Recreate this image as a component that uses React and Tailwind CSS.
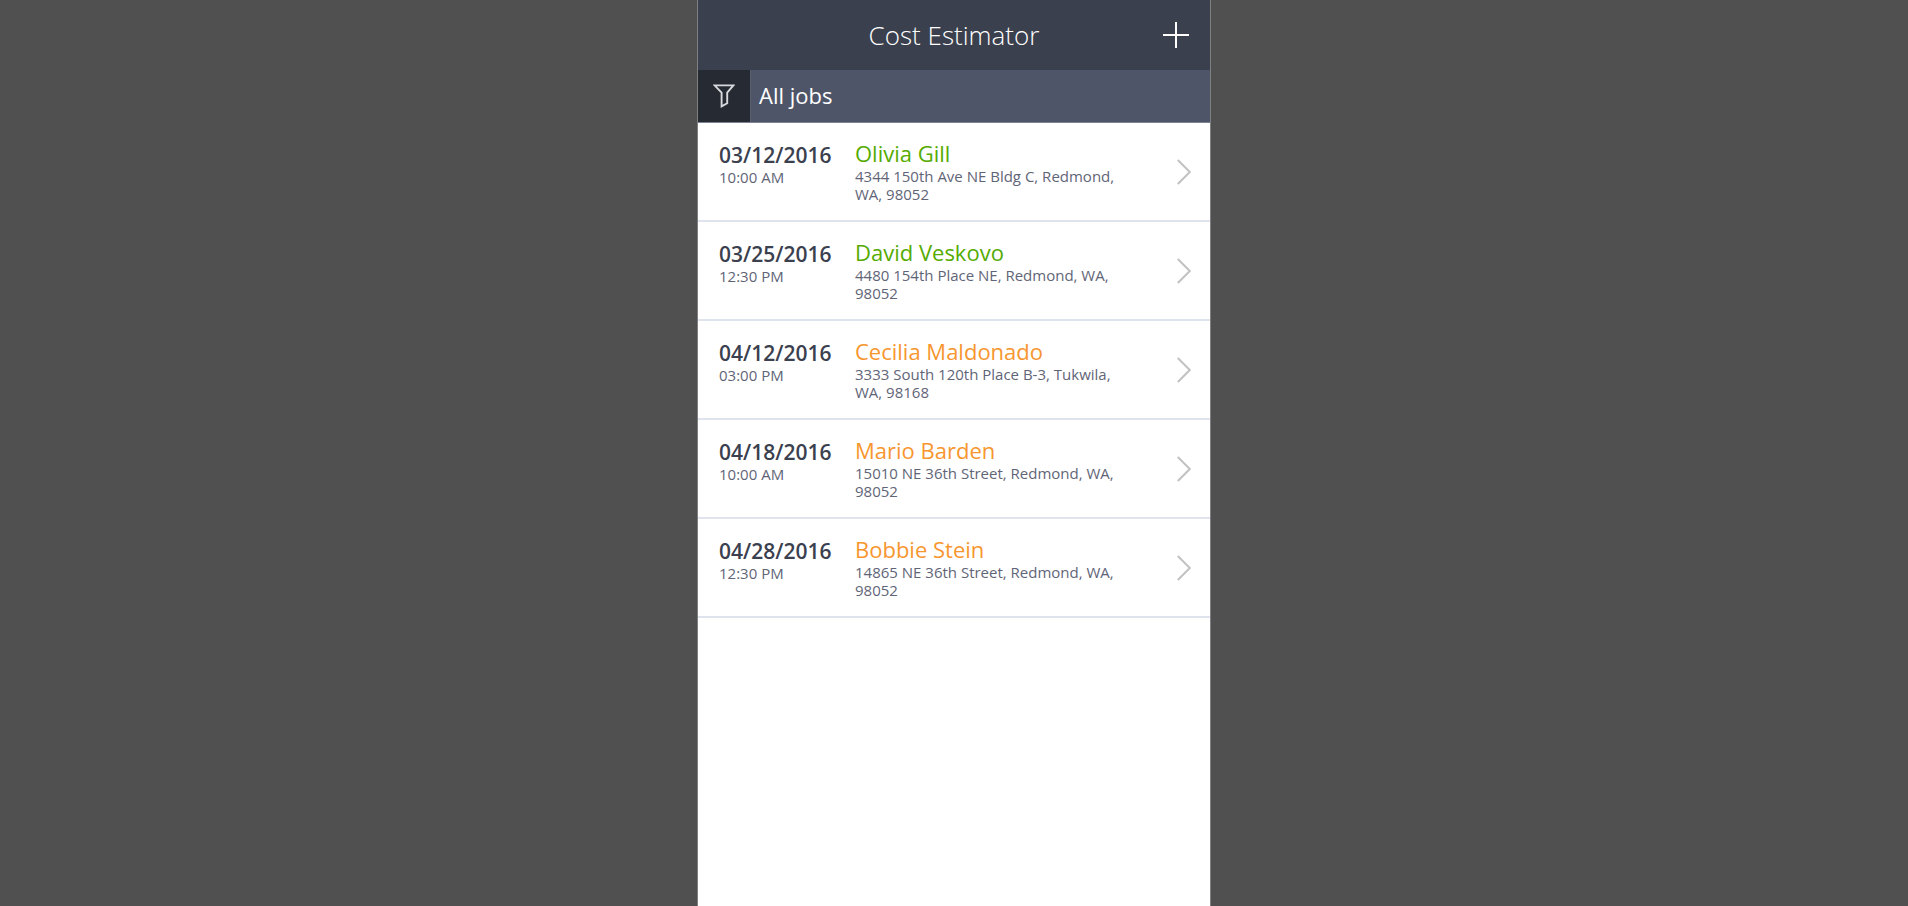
import React from 'react';

const jobs = [
  { date: '03/12/2016', time: '10:00 AM', name: 'Olivia Gill', address: '4344 150th Ave NE Bldg C, Redmond, WA, 98052', done: true },
  { date: '03/25/2016', time: '12:30 PM', name: 'David Veskovo', address: '4480 154th Place NE, Redmond, WA, 98052', done: true },
  { date: '04/12/2016', time: '03:00 PM', name: 'Cecilia Maldonado', address: '3333 South 120th Place B-3, Tukwila, WA, 98168', done: false },
  { date: '04/18/2016', time: '10:00 AM', name: 'Mario Barden', address: '15010 NE 36th Street, Redmond, WA, 98052', done: false },
  { date: '04/28/2016', time: '12:30 PM', name: 'Bobbie Stein', address: '14865 NE 36th Street, Redmond, WA, 98052', done: false },
];

const PlusIcon = () => (
  <svg width="26" height="26" viewBox="0 0 26 26" fill="none" stroke="currentColor" strokeWidth="2" aria-hidden="true">
    <path d="M13 0v26M0 13h26" />
  </svg>
);

const FilterIcon = () => (
  <svg width="22" height="24" viewBox="0 0 22 24" fill="none" stroke="currentColor" strokeWidth="1.9" aria-hidden="true">
    <path d="M1.6 1.4h18.8L14.2 8.6v10.6L8.6 22.4V8.6z" />
  </svg>
);

const ChevronIcon = () => (
  <svg width="14" height="26" viewBox="0 0 14 26" fill="none" stroke="currentColor" strokeWidth="2" aria-hidden="true">
    <path d="M.8 1l12 12-12 12" />
  </svg>
);

const JobRow = ({ job }) => (
  <li className="border-b-2 border-[#dfe3ed]">
    <a href="#job" className="flex items-start pt-[17px] pb-[17px] pl-[21px] pr-[19px]">
      <div className="w-[136px] shrink-0 pt-0.5">
        <div className="text-[21px] leading-[26px] font-semibold text-[#3b404e]">{job.date}</div>
        <div className="text-[15px] leading-[18px] text-[#5f6577]">{job.time}</div>
      </div>
      <div className="min-w-0 flex-1 pr-12">
        <div className={job.done ? 'mb-px text-[22px] leading-[26px] text-[#55ab00]' : 'mb-px text-[22px] leading-[26px] text-[#f7962f]'}>
          {job.name}
        </div>
        <div className="text-[15px] leading-[18px] text-[#5f6577]">{job.address}</div>
      </div>
      <span className="mt-[19px] text-[#c2c2c2]">
        <ChevronIcon />
      </span>
    </a>
  </li>
);

const App = () => {
  return (
    <div className="min-h-screen bg-[#505050] flex justify-center font-['Open_Sans',sans-serif]">
      <main className="w-full max-w-[514px] bg-white border-x border-[#7f7f7f]">
        <header className="h-[70px] bg-[#3b404e] text-white grid grid-cols-[1fr_auto_1fr] items-center px-[21px]">
          <h1 className="col-start-2 text-[26px] leading-[36px] font-light">Cost Estimator</h1>
          <button type="button" aria-label="Add job" className="justify-self-end">
            <PlusIcon />
          </button>
        </header>

        <div className="h-[53px] flex bg-[#4f5568] border-b border-[#7d8296] text-white">
          <button type="button" aria-label="Filter jobs" className="w-[53px] flex items-center justify-center bg-[#262a33] border-r border-[#5a5f6d] text-[#d8d9dd]">
            <FilterIcon />
          </button>
          <h2 className="pt-2.5 pl-2 text-[22px] leading-[30px]">All jobs</h2>
        </div>

        <ul>
          {jobs.map((job) => (
            <JobRow key={job.date} job={job} />
          ))}
        </ul>
      </main>
    </div>
  );
};

export default App;
